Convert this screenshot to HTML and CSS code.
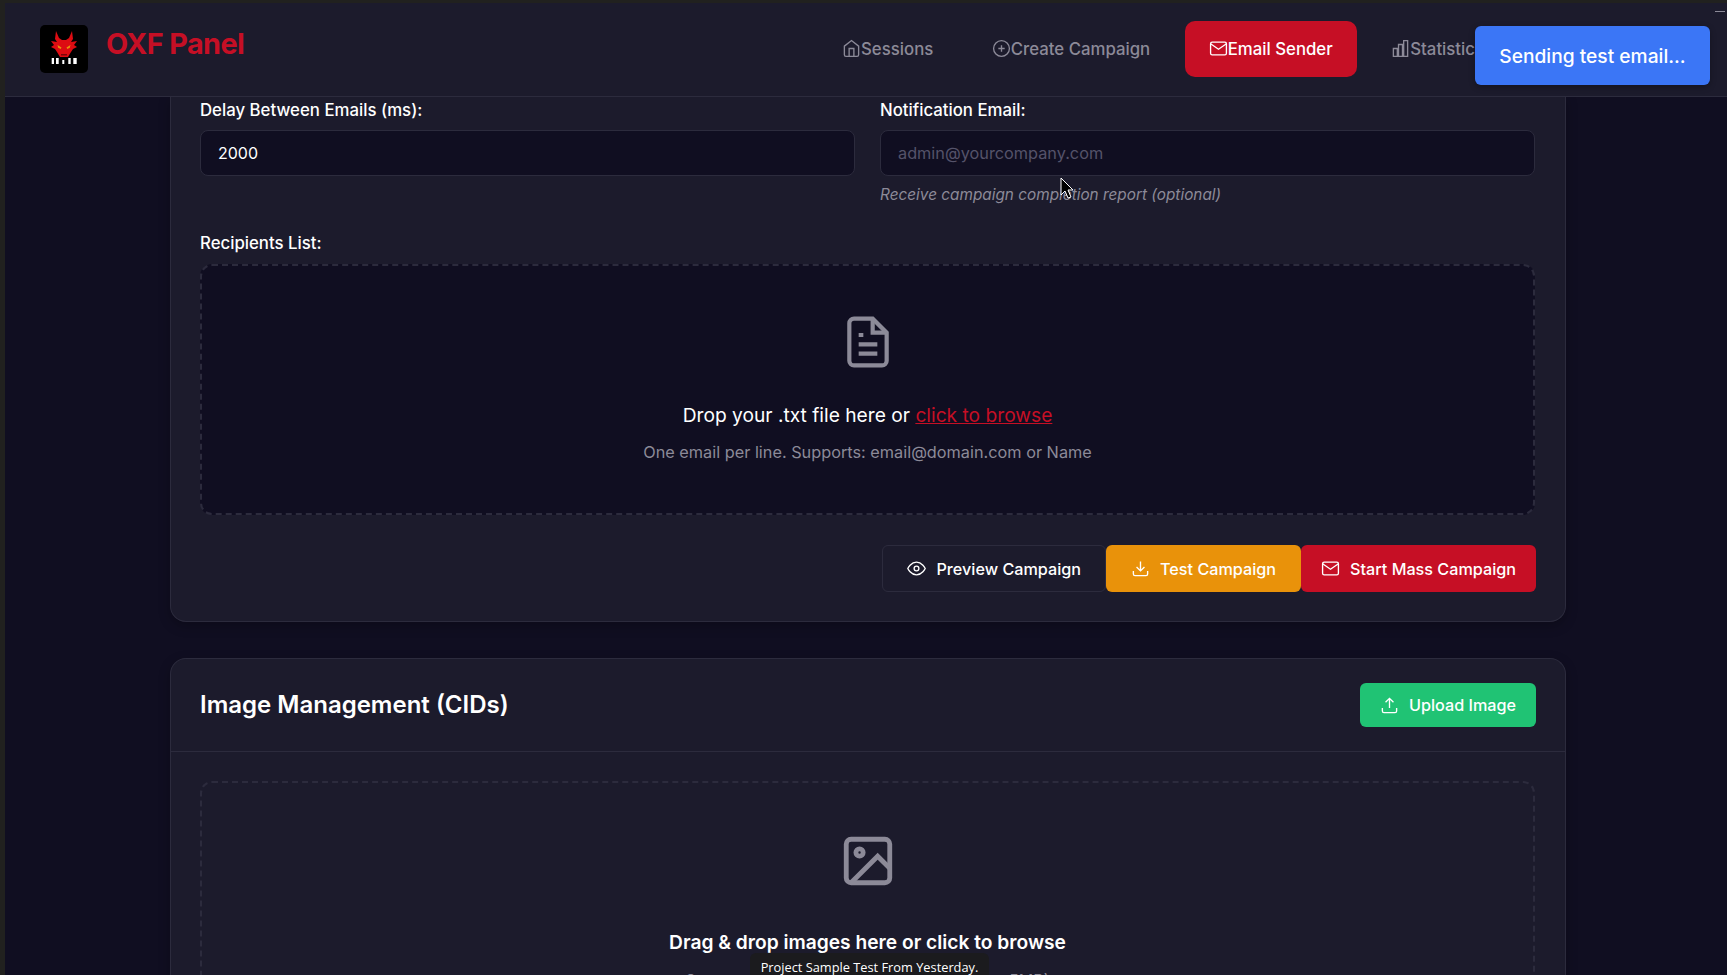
FILE: index.html
```html
<!DOCTYPE html>
<html lang="en">
<head>
<meta charset="utf-8">
<title>OXF Panel</title>
<link rel="stylesheet" href="styles.css">
</head>
<body>
<div class="app">
  <header class="navbar">
    <div class="brand">
      <svg class="logo" viewBox="0 0 48 48">
        <rect width="48" height="48" rx="5" fill="#000"/>
        <path fill="#dd0c12" d="M16 6l3 7 3 2h4l3-2 3-7 1 8-2 3 6-1-3 4 3 2-4 2-2 3-3 5h-8l-3-5-2-3-4-2 3-2-3-4 6 1-2-3z"/>
        <path fill="#e8930c" d="M17.500 20l4 2.500-.8 1.500-2.500-1.300zM30.500 20l-4 2.500.8 1.500 2.500-1.300z"/>
        <path fill="#7a0508" d="M21 29h6v1.500h-6z"/>
        <path fill="#fff" d="M11.700 33H14v6h-2.300zM16 33h2.700v6H16zM22.300 35h2v4h-2zM28.300 33h2.400v6h-2.400zM33.300 33h3.400v6h-3.400z"/>
      </svg>
      <span class="brand-name">OXF Panel</span>
    </div>
    <nav class="nav">
      <a class="nav-item"><svg class="ico-nav" viewBox="0 0 24 24"><path d="M3 9l9-7 9 7v11a2 2 0 0 1-2 2H5a2 2 0 0 1-2-2z"/><path d="M9 22V12h6v10"/></svg>Sessions</a>
      <a class="nav-item"><svg class="ico-nav" viewBox="0 0 24 24"><circle cx="12" cy="12" r="10"/><path d="M12 8v8M8 12h8"/></svg>Create Campaign</a>
      <a class="nav-item nav-active"><svg class="ico-nav" viewBox="0 0 24 24"><path d="M4 4h16c1.100 0 2 .9 2 2v12c0 1.100-.9 2-2 2H4c-1.100 0-2-.9-2-2V6c0-1.100.9-2 2-2z"/><path d="M22 6l-10 7L2 6"/></svg>Email Sender</a>
      <a class="nav-item"><svg class="ico-nav" viewBox="0 0 24 24"><path d="M3 12h5v10H3zM9.500 7h5v15h-5zM16 2h5v20h-5z"/></svg>Statistics</a>
    </nav>
    <span class="corner-dash"></span>
  </header>
  <main class="main">
    <section class="card card-top">
      <div class="fields">
        <div class="field">
          <label class="label">Delay Between Emails (ms):</label>
          <div class="input">2000</div>
        </div>
        <div class="field">
          <label class="label">Notification Email:</label>
          <div class="input input-empty">admin@yourcompany.com</div>
          <p class="hint">Receive campaign completion report (optional)</p>
        </div>
      </div>
      <label class="label label-rec">Recipients List:</label>
      <div class="dropzone">
        <svg class="ico-file" viewBox="0 0 24 24"><path d="M14 2H6a2 2 0 0 0-2 2v16a2 2 0 0 0 2 2h12a2 2 0 0 0 2-2V8z"/><path d="M14 2v6h6M16 13H8M16 17H8M10 9H8"/></svg>
        <p class="drop-title">Drop your .txt file here or <a class="browse">click to browse</a></p>
        <p class="drop-sub">One email per line. Supports: email@domain.com or Name</p>
      </div>
      <div class="actions">
        <button class="btn btn-ghost"><svg class="ico-btn" viewBox="0 0 24 24"><path d="M1 12s4-8 11-8 11 8 11 8-4 8-11 8-11-8-11-8z"/><circle cx="12" cy="12" r="3"/></svg>Preview Campaign</button>
        <button class="btn btn-amber"><svg class="ico-btn" viewBox="0 0 24 24"><path d="M21 15v4a2 2 0 0 1-2 2H5a2 2 0 0 1-2-2v-4"/><path d="M7 10l5 5 5-5M12 15V3"/></svg>Test Campaign</button>
        <button class="btn btn-red"><svg class="ico-btn" viewBox="0 0 24 24"><path d="M4 4h16c1.100 0 2 .9 2 2v12c0 1.100-.9 2-2 2H4c-1.100 0-2-.9-2-2V6c0-1.100.9-2 2-2z"/><path d="M22 6l-10 7L2 6"/></svg>Start Mass Campaign</button>
      </div>
    </section>
    <section class="card card-images">
      <div class="card-head">
        <h2 class="card-title">Image Management (CIDs)</h2>
        <button class="btn btn-green"><svg class="ico-btn" viewBox="0 0 24 24"><path d="M21 15v4a2 2 0 0 1-2 2H5a2 2 0 0 1-2-2v-4"/><path d="M17 8l-5-5-5 5M12 3v12"/></svg>Upload Image</button>
      </div>
      <div class="card-body">
        <div class="dropzone-img">
          <svg class="ico-image" viewBox="0 0 24 24"><rect x="3" y="3" width="18" height="18" rx="2"/><circle cx="8.500" cy="8.500" r="1.500"/><path d="M21 15l-5-5L5 21"/></svg>
          <p class="drag-title">Drag &amp; drop images here or click to browse</p>
          <p class="drag-sub">Supports JPG, PNG, GIF, WebP, SVG (Max 5MB)</p>
        </div>
      </div>
    </section>
  </main>
  <div class="toast">Sending test email...</div>
</div>
<div class="caption">Project Sample Test From Yesterday.</div>
<svg class="cursor" viewBox="0 0 14 22"><path d="M1 1v17l4-4 3 7 3-1-3-7h5z"/></svg>
</body>
</html>
```
FILE: styles.css
```css
* { box-sizing: border-box; }
html, body { margin: 0; height: 975px; overflow: hidden; }
body {
  background: #21211f;
  padding: 3px 0 0 5px;
  font-family: Inter, "Liberation Sans", sans-serif;
  color: #fff;
  position: relative;
}
.app {
  position: relative;
  height: 972px;
  background: #100e21;
  display: flex;
  flex-direction: column;
  overflow: hidden;
}
.navbar {
  flex: none;
  height: 94px;
  background: #1c1b2c;
  border-bottom: 1px solid #2c2b3d;
  display: flex;
  align-items: center;
  padding: 0 0 0 35px;
  position: relative;
  overflow: hidden;
}
.brand { display: flex; align-items: flex-start; gap: 18px; width: 778px; flex: none; margin-top: -1px; }
.logo { width: 48px; height: 48px; flex: none; }
.brand-name { font-size: 28.800px; font-weight: 700; color: #c60f25; letter-spacing: -0.6px; line-height: 36px; margin-top: 1px; }
.nav { display: flex; gap: 10.500px; flex: none; align-items: center; margin-top: -2px; }
.nav-item {
  display: flex;
  align-items: center;
  height: 56px;
  padding: 0 24px;
  border-radius: 10px;
  font-size: 16.800px;
  font-weight: 500;
  color: #8c8a98;
  white-space: nowrap;
}
.nav-active { background: #c60f25; color: #fff; }
.ico-nav { width: 19px; height: 19px; fill: none; stroke: currentColor; stroke-width: 1.700; flex: none; }
.corner-dash { position: absolute; right: 2px; top: 8px; width: 10px; height: 1px; background: #8c8a98; }
.main { flex: 1; padding: 0 161px 0 165px; overflow: hidden; }
.card {
  width: 1396px;
  background: #1c1b2c;
  border: 1px solid #2c2b3d;
  box-shadow: 0 4px 12px rgba(0,0,0,.25);
}
.card-top {
  border-top: 0;
  border-radius: 0 0 16px 16px;
  padding: 4px 30px 29px 29px;
}
.fields { display: grid; grid-template-columns: 655px 655px; gap: 25px; }
.label { display: block; font-size: 16.800px; font-weight: 500; line-height: 19px; color: #fff; }
.input {
  margin-top: 10px;
  height: 46px;
  background: #100e21;
  border: 1px solid #2c2b3d;
  border-radius: 8px;
  padding: 0 17px;
  display: flex;
  align-items: center;
  font-size: 16px;
  color: #fff;
}
.input-empty { color: #55536a; font-size: 16.300px; }
.hint { margin: 9px 0 0; font-size: 15.350px; font-style: italic; color: #8c8a98; line-height: 19px; }
.label-rec { margin-top: 30px; }
.dropzone {
  margin-top: 11px;
  height: 251px;
  background: #100e21;
  border: 2px dashed #2c2b3d;
  border-radius: 12px;
  display: flex;
  flex-direction: column;
  align-items: center;
  padding-top: 48px;
}
.ico-file { width: 56px; height: 56px; fill: none; stroke: #8c8a98; stroke-width: 1.800; }
.drop-title { margin: 32px 0 0; font-size: 19.200px; line-height: 26px; }
.browse { color: #c60f25; text-decoration: underline; }
.drop-sub { margin: 13px 0 0; font-size: 16.300px; line-height: 22px; color: #8c8a98; }
.actions { display: flex; justify-content: flex-end; margin: 30px -1px 0 0; }
.btn {
  display: flex;
  align-items: center;
  gap: 10px;
  height: 47px;
  padding: 0 24px;
  border: 1px solid transparent;
  border-radius: 6px;
  font: 500 16.200px Inter, "Liberation Sans", sans-serif;
  color: #fff;
  white-space: nowrap;
}
.ico-btn { width: 19px; height: 19px; fill: none; stroke: currentColor; stroke-width: 1.700; flex: none; }
.btn-ghost { background: transparent; border-color: #2c2b3d; }
.btn-amber { background: #e9920a; }
.btn-red { background: #c60f25; padding: 0 19px; }
.btn-green { background: #20c374; height: 44px; padding: 0 19px; }
.card-images {
  margin-top: 36px;
  border-radius: 16px 16px 0 0;
  border-bottom: 0;
}
.card-head {
  height: 93px;
  border-bottom: 1px solid #2c2b3d;
  display: flex;
  align-items: center;
  justify-content: space-between;
  padding: 0 29px;
}
.card-title { margin: 0 0 2px; font-size: 24px; font-weight: 600; }
.card-body { padding: 29px 30px 0 29px; }
.dropzone-img {
  height: 300px;
  border: 2px dashed #2c2b3d;
  border-radius: 12px;
  display: flex;
  flex-direction: column;
  align-items: center;
  padding-top: 49px;
}
.ico-image { width: 58px; height: 58px; fill: none; stroke: #8c8a98; stroke-width: 2; }
.drag-title { margin: 39px 0 0; font-size: 19.200px; font-weight: 600; line-height: 26px; }
.drag-sub { margin: 14px 0 0; font-size: 16px; line-height: 22px; color: #8c8a98; }
.toast {
  position: absolute;
  left: 1470px;
  top: 23px;
  width: 235px;
  height: 59px;
  background: #3b76f6;
  border-radius: 6px;
  display: flex;
  align-items: center;
  justify-content: center;
  font-size: 19.200px;
  font-weight: 500;
  box-shadow: 0 2px 6px rgba(0,0,0,.3);
}
.caption {
  position: absolute;
  left: 750px;
  top: 953px;
  width: 239px;
  height: 22px;
  background: #1b1b1e;
  border-radius: 6px 6px 0 0;
  font: 12.800px/28px "Open Sans", sans-serif;
  color: #fff;
  text-align: center;
  white-space: nowrap;
}
.cursor {
  position: absolute;
  left: 1060px;
  top: 177px;
  width: 14px;
  height: 22px;
  fill: #000;
  stroke: #fff;
  stroke-width: 1;
}
```
